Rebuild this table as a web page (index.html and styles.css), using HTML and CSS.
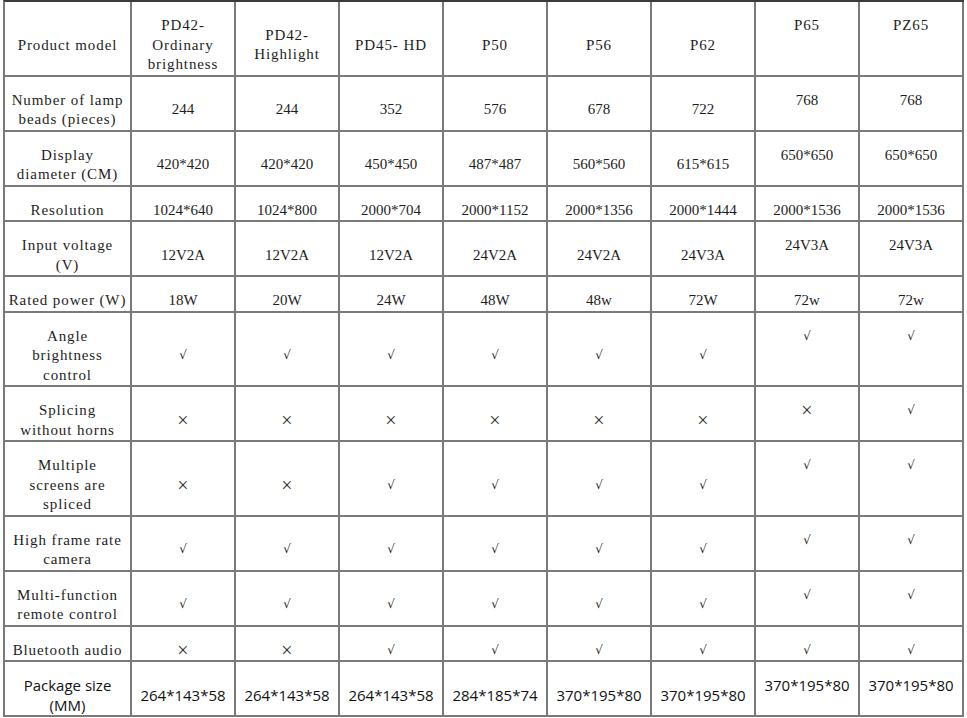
FILE: index.html
```html
<!DOCTYPE html>
<html>
<head>
<meta charset="utf-8">
<link rel="stylesheet" href="styles.css">
</head>
<body>
<table class="spec">
  <colgroup>
    <col class="c-label">
    <col class="c-val"><col class="c-val"><col class="c-val"><col class="c-val">
    <col class="c-val"><col class="c-val"><col class="c-val"><col class="c-val">
  </colgroup>
  <tr class="head">
    <td class="lbl">Product model</td>
    <td class="hd">PD42-<br>Ordinary<br>brightness</td>
    <td class="hd">PD42-<br>Highlight</td>
    <td class="hd">PD45- HD</td>
    <td class="hd">P50</td>
    <td class="hd">P56</td>
    <td class="hd">P62</td>
    <td class="hd top">P65</td>
    <td class="hd top">PZ65</td>
  </tr>
  <tr>
    <td class="lbl">Number of lamp<br>beads (pieces)</td>
    <td>244</td><td>244</td><td>352</td><td>576</td><td>678</td><td>722</td>
    <td class="top">768</td><td class="top">768</td>
  </tr>
  <tr>
    <td class="lbl">Display<br>diameter (CM)</td>
    <td>420*420</td><td>420*420</td><td>450*450</td><td>487*487</td><td>560*560</td><td>615*615</td>
    <td class="top">650*650</td><td class="top">650*650</td>
  </tr>
  <tr>
    <td class="lbl">Resolution</td>
    <td>1024*640</td><td>1024*800</td><td>2000*704</td><td>2000*1152</td><td>2000*1356</td><td>2000*1444</td>
    <td class="top">2000*1536</td><td class="top">2000*1536</td>
  </tr>
  <tr>
    <td class="lbl">Input voltage<br>(V)</td>
    <td>12V2A</td><td>12V2A</td><td>12V2A</td><td>24V2A</td><td>24V2A</td><td>24V3A</td>
    <td class="top">24V3A</td><td class="top">24V3A</td>
  </tr>
  <tr>
    <td class="lbl">Rated power (W)</td>
    <td>18W</td><td>20W</td><td>24W</td><td>48W</td><td>48w</td><td>72W</td>
    <td class="top">72w</td><td class="top">72w</td>
  </tr>
  <tr>
    <td class="lbl">Angle<br>brightness<br>control</td>
    <td class="mk">√</td><td class="mk">√</td><td class="mk">√</td><td class="mk">√</td><td class="mk">√</td><td class="mk">√</td>
    <td class="mk top">√</td><td class="mk top">√</td>
  </tr>
  <tr>
    <td class="lbl">Splicing<br>without horns</td>
    <td class="x">×</td><td class="x">×</td><td class="x">×</td><td class="x">×</td><td class="x">×</td><td class="x">×</td>
    <td class="x top">×</td><td class="mk top">√</td>
  </tr>
  <tr>
    <td class="lbl">Multiple<br>screens are<br>spliced</td>
    <td class="x">×</td><td class="x">×</td><td class="mk">√</td><td class="mk">√</td><td class="mk">√</td><td class="mk">√</td>
    <td class="mk top">√</td><td class="mk top">√</td>
  </tr>
  <tr>
    <td class="lbl">High frame rate<br>camera</td>
    <td class="mk">√</td><td class="mk">√</td><td class="mk">√</td><td class="mk">√</td><td class="mk">√</td><td class="mk">√</td>
    <td class="mk top">√</td><td class="mk top">√</td>
  </tr>
  <tr>
    <td class="lbl">Multi-function<br>remote control</td>
    <td class="mk">√</td><td class="mk">√</td><td class="mk">√</td><td class="mk">√</td><td class="mk">√</td><td class="mk">√</td>
    <td class="mk top">√</td><td class="mk top">√</td>
  </tr>
  <tr>
    <td class="lbl">Bluetooth audio</td>
    <td class="x">×</td><td class="x">×</td><td class="mk">√</td><td class="mk">√</td><td class="mk">√</td><td class="mk">√</td>
    <td class="mk top">√</td><td class="mk top">√</td>
  </tr>
  <tr class="pkg">
    <td class="lbl">Package size<br>(MM)</td>
    <td>264*143*58</td><td>264*143*58</td><td>264*143*58</td><td>284*185*74</td><td>370*195*80</td><td>370*195*80</td>
    <td class="top">370*195*80</td><td class="top">370*195*80</td>
  </tr>
</table>
</body>
</html>
```

FILE: styles.css
```css
html, body {
  margin: 0;
  padding: 0;
  background: #ffffff;
}

.spec {
  margin-left: 3px;
  border-collapse: separate;
  border-spacing: 0;
  table-layout: fixed;
  width: 961px;
  border-top: 2px solid #3c3c3c;
  border-left: 2px solid #7a7a7a;
  color: #1e1e1e;
}

.c-label { width: 127px; }
.c-val { width: 104px; }

.spec td {
  box-sizing: border-box;
  border-right: 2px solid #7a7a7a;
  border-bottom: 2px solid #7a7a7a;
  padding: 14px 0 0 0;
  text-align: center;
  vertical-align: middle;
  line-height: 19.5px;
  font-family: "Liberation Serif", "Times New Roman", serif;
  font-size: 15px;
  white-space: nowrap;
}

.spec td.lbl,
.spec td.hd {
  letter-spacing: 0.9px;
}

.spec td.top {
  vertical-align: top;
}

.spec td.mk {
  font-family: "DejaVu Serif", "Liberation Serif", serif;
  font-size: 12px;
}

.spec td.x {
  font-family: "Liberation Serif", "DejaVu Serif", serif;
  font-size: 20px;
  color: #333333;
}

.spec tr.pkg td,
.spec tr.pkg td.lbl {
  font-family: "Open Sans", "Noto Sans", sans-serif;
  font-size: 15px;
  letter-spacing: 0;
  color: #111111;
}
```
